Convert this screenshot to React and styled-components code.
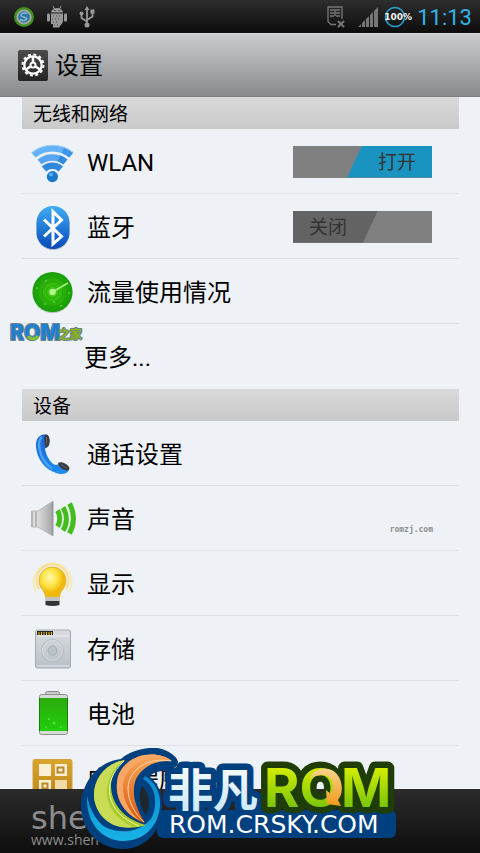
import React, { useState } from 'react'
import styled, { createGlobalStyle } from 'styled-components'

const GlobalStyle = createGlobalStyle`
  * {
    box-sizing: border-box;
  }
  body {
    margin: 0;
    background: #eef2f6;
    font-family: Roboto, 'Noto Sans CJK SC', sans-serif;
    color: #000000;
  }
`

const Screen = styled.div`
  position: relative;
  display: flex;
  flex-direction: column;
  height: 100vh;
  overflow: hidden;
`

const StatusBar = styled.div`
  flex: none;
  display: flex;
  align-items: center;
  justify-content: space-between;
  height: 33px;
  padding: 0 8px 0 13px;
  background: linear-gradient(#2e2e2e, #0c0c0c);
`

const StatusGroup = styled.div`
  display: flex;
  align-items: center;
  gap: ${props => props.$gap}px;
`

const BatteryLevel = styled.div`
  position: relative;
  display: flex;
  width: 27px;
  span {
    position: absolute;
    top: 5px;
    left: 0;
    color: #f4f4f4;
    font-family: 'DejaVu Sans', sans-serif;
    font-size: 9px;
    font-weight: bold;
    line-height: 12px;
  }
`

const Clock = styled.time`
  padding-top: 2px;
  color: #33b5e5;
  font-size: 22px;
  line-height: 30px;
`

const TitleBar = styled.header`
  flex: none;
  display: flex;
  align-items: center;
  gap: 7px;
  height: 64px;
  padding: 0 18px;
  border-top: 1px solid #d9dadc;
  border-bottom: 1px solid #7c7d81;
  background: linear-gradient(#cbccce, #88898d);
`

const Title = styled.h1`
  margin: 0;
  padding-top: 2px;
  font-size: 24px;
  font-weight: normal;
  line-height: 32px;
`

const Content = styled.main`
  position: relative;
  flex: 1;
  min-height: 0;
  overflow: hidden;
  padding: 0 21px 0 22px;
`

const SectionTitle = styled.h2`
  margin: 0;
  padding: 3px 11px 0;
  background: linear-gradient(#d9d9d9, #c9c9c9);
  font-size: 19px;
  font-weight: normal;
  line-height: 29px;
`

const List = styled.ul`
  margin: 0;
  padding: 0;
  list-style: none;
`

const Item = styled.li`
  height: 65px;
  border-bottom: 1px solid #dde1e4;
  &:last-child {
    border-bottom-color: transparent;
  }
`

const Row = styled.a`
  display: flex;
  align-items: center;
  gap: 12px;
  height: 100%;
  padding: 1px 27px 0 ${props => (props.$plain ? 62 : 9)}px;
  color: inherit;
  font-size: 24px;
  line-height: 32px;
  text-decoration: none;
`

const RowLabel = styled.span`
  flex: 1;
  padding-top: 3px;
`

const HiddenCheckbox = styled.input`
  position: absolute;
  opacity: 0;
`

const Track = styled.span`
  display: flex;
  justify-content: ${props => (props.$on ? 'flex-end' : 'flex-start')};
  width: 139px;
  height: 32px;
  background: #808080;
`

const Thumb = styled.span`
  width: 85px;
  padding: ${props => (props.$on ? '2px 0 0 15px' : '2px 15px 0 0')};
  background: ${props => (props.$on ? '#1a93c0' : '#636363')};
  clip-path: ${props =>
    props.$on
      ? 'polygon(15px 0, 100% 0, 100% 100%, 0 100%)'
      : 'polygon(0 0, 100% 0, 70px 100%, 0 100%)'};
  color: #333333;
  font-size: 19px;
  line-height: 30px;
  text-align: center;
`

const Footer = styled.footer`
  flex: none;
  height: 64px;
  padding: 14px 31px 0;
  background: linear-gradient(#2b2b2b, #0e0e0e);
  color: #8c8c8c;
`

const Brand = styled.div`
  font-family: 'DejaVu Sans', sans-serif;
  font-size: 32px;
  line-height: 30px;
`

const BrandSite = styled.div`
  font-family: 'Open Sans', sans-serif;
  font-size: 14px;
  line-height: 14px;
`

const HomeMark = styled.svg`
  position: absolute;
  top: 222px;
  left: 8px;
`

const SiteMark = styled.span`
  position: absolute;
  top: 428px;
  right: 47px;
  color: #8b8e90;
  font-family: 'DejaVu Sans Mono', monospace;
  font-size: 8px;
  font-weight: bold;
  line-height: 10px;
`

const Badge = styled.svg`
  position: absolute;
  bottom: 3px;
  left: 50%;
  transform: translateX(-50%);
`

const Icon = ({ children }) => (
  <svg width="44" height="48" viewBox="0 0 44 48" fill="none" overflow="visible" aria-hidden="true">
    {children}
  </svg>
)

const Gradient = ({ id, from, to, across }) => (
  <linearGradient id={id} x1="0" y1="0" x2={across ? 1 : 0} y2={across ? 0 : 1}>
    <stop offset="0" stopColor={from} />
    <stop offset="1" stopColor={to} />
  </linearGradient>
)

const WlanIcon = () => (
  <Icon>
    <g strokeWidth="6.500">
      <path d="M2.500 17A29.6 29.6 0 0 1 40.300 17" stroke="#66b2f8" />
      <path d="M32 12A29.6 29.6 0 0 1 40.300 17" stroke="#3c94ea" />
      <path d="M8.500 24A21 21 0 0 1 34.300 24" stroke="#58a6f2" />
      <path d="M28 20.200A21 21 0 0 1 34.300 24" stroke="#318ae0" />
      <path d="M13 31A12.5 12.5 0 0 1 29.800 31" stroke="#2f88dc" />
    </g>
    <path d="M1 14.500A33 33 0 0 1 42 14.500" stroke="#9bd0ff" />
    <circle cx="21.4" cy="38.6" r="5.6" fill="#1879cd" />
    <circle cx="20" cy="36.5" r="2" fill="#5bb0f0" />
  </Icon>
)

const BluetoothIcon = () => (
  <Icon>
    <Gradient id="bt" from="#41adf5" to="#0549b8" />
    <rect x="5.5" y="3.5" width="33" height="43.5" rx="16.5" fill="#aeb9c6" />
    <rect x="5.5" y="3" width="33" height="43" rx="16.5" fill="url(#bt)" />
    <path d="M13 16.5 30.5 33.5 22 41V8.500L30.5 17 13 33.500" stroke="#ffffff" strokeWidth="3" />
  </Icon>
)

const DataIcon = () => (
  <Icon>
    <radialGradient id="radar">
      <stop offset="0" stopColor="#48d013" />
      <stop offset="1" stopColor="#169c05" />
    </radialGradient>
    <circle cx="21.5" cy="25" r="20" fill="#b4c3b4" />
    <circle cx="21.5" cy="24" r="20" fill="url(#radar)" />
    <g stroke="#158f08" strokeOpacity="0.4">
      <circle cx="21.5" cy="24" r="6" />
      <circle cx="21.5" cy="24" r="10.500" />
      <circle cx="21.5" cy="24" r="15" />
    </g>
    <path d="M21.5 24 37 15" stroke="#a8f07e" strokeWidth="1.6" />
    <circle cx="21.500" cy="24" r="3.2" fill="#b6f58d" />
    <g fill="#8be95c">
      <circle cx="15" cy="13" r="0.8" />
      <circle cx="6" cy="20" r="0.8" />
      <circle cx="14" cy="36" r="0.8" />
      <circle cx="23" cy="34" r="0.8" />
      <circle cx="30" cy="38" r="0.8" />
      <circle cx="38" cy="25" r="0.8" />
    </g>
  </Icon>
)

const CallIcon = () => (
  <Icon>
    <Gradient id="call" from="#1c63d0" to="#1e8cf2" />
    <path
      d="M12.500 4.500C7 5.500 4.500 10 5 17C6 29 14 39.500 25 43C31 45 36.500 44 38 39.500C37.500 36 33 33 28.500 33C27 33.500 26.500 36 23 34.500C18.500 31.500 15 25 14 18.500C16 18 17 17 18 15C19 11 18 6 16 4.500Z"
      fill="url(#call)"
    />
    <path d="M11 7C7.500 10 7.500 14 8.500 19C10 27 14 34 21 38.500" stroke="#4aa2f5" strokeWidth="2.500" />
    <path d="M14 5C17 4 18 6 18.500 9C19 13 18 17 14.500 17.500C13 13 13 8 14 5Z" fill="#3b3b3f" />
    <path d="M27 33C30 31 37 34 38.500 38C38 41 36 41 34 40C31 39 28 37 27 33Z" fill="#3b3b3f" />
    <path d="M15.500 7V14M30 34.500 36 38.500" stroke="#66666a" />
  </Icon>
)

const SoundIcon = () => (
  <Icon>
    <Gradient id="cone" from="#f1f1f1" to="#a5a5a7" across />
    <path d="M0.500 16H7L22 6V41L7 32H0.500Z" fill="url(#cone)" stroke="#b7b7b9" />
    <path d="M1 16.500H6V31.500H1Z" fill="#b6b6b8" />
    <path d="M3 17V31" stroke="#dcdcde" strokeWidth="2" />
    <path d="M21.500 7V40.500" stroke="#98989a" strokeWidth="1.500" />
    <g stroke="#42bd1d" strokeWidth="5">
      <path d="M26.500 15.500C29.500 20 29.500 27 26.500 31.500" />
      <path d="M32 12.500C36.500 19 36.500 29 32 35.500" />
      <path d="M38.500 8.500C43.500 18 43.500 29 38.500 38.500" />
    </g>
  </Icon>
)

const DisplayIcon = () => (
  <Icon>
    <radialGradient id="bulb" cx="0.400" cy="0.350">
      <stop offset="0" stopColor="#fff8ad" />
      <stop offset="0.600" stopColor="#fde23f" />
      <stop offset="1" stopColor="#f2b90d" />
    </radialGradient>
    <path d="M5 32A19 19 0 1 1 38 32" stroke="#f7e9bd" strokeWidth="2" />
    <path d="M8 29A16 16 0 1 1 35 29" stroke="#f9df8f" strokeWidth="2" />
    <path
      d="M14.500 37C14.500 31 8 28 8 20.500A13.500 13.500 0 0 1 35 20.500C35 28 28.500 31 28.500 37Z"
      fill="url(#bulb)"
      stroke="#e1b62c"
    />
    <path d="M14 37H29V41H14Z" fill="#c3c3c3" />
    <path d="M14.500 41H28.500V45Q21.500 47 14.500 45Z" fill="#333333" />
  </Icon>
)

const StorageIcon = () => (
  <Icon>
    <Gradient id="disk" from="#d8dce0" to="#b9c0c7" />
    <rect x="4.500" y="5" width="35" height="38" rx="2" fill="url(#disk)" stroke="#a5abb1" />
    <path d="M6 11H38M6 41H38" stroke="#e8ecef" />
    <path d="M6 6H22V10H6Z" fill="#2c2614" />
    <path d="M8 7V10M10.500 7V10M13 7V10M15.500 7V10M18 7V10M20.500 7V10" stroke="#e9c83a" />
    <circle cx="21.500" cy="25.500" r="11" stroke="#b3bac1" />
    <circle cx="21.500" cy="25.500" r="10" stroke="#d6dbe0" />
    <circle cx="21.500" cy="25.500" r="4.500" fill="#bcc4cb" stroke="#a4acb4" />
  </Icon>
)

const BatteryIcon = () => (
  <Icon>
    <Gradient id="cell" from="#2cab0d" to="#20cf0b" />
    <rect x="14.500" y="1.500" width="14" height="5" rx="2" fill="#cccccc" stroke="#858585" />
    <rect x="8.500" y="4.500" width="28" height="40" rx="2" fill="#d7dad7" stroke="#8a908a" />
    <path d="M8 8H37V41H8Z" fill="url(#cell)" />
    <path d="M8.500 8V41M36.500 8V41" stroke="#197d0b" />
    <g fill="#4ddc3a">
      <circle cx="18" cy="29" r="1.200" />
      <circle cx="23" cy="33" r="1.500" />
      <circle cx="30" cy="37" r="1.200" />
      <circle cx="15" cy="37" r="1" />
    </g>
  </Icon>
)

const AppsIcon = () => (
  <Icon>
    <Gradient id="apps" from="#d9a62d" to="#bb8315" />
    <rect x="2" y="4.500" width="39" height="40" rx="2" fill="url(#apps)" stroke="#d0a03c" />
    <g fill="#f8efd5">
      <path d="M8 9H20V21H8ZM24 9H36V21H24ZM8 25H20V37H8Z" />
      <path d="M24 25H36V37H24Z" fill="#f1d9a8" />
    </g>
    <path d="M26.500 12.500H32.500V17.500H26.500ZM11.500 28.500H16.500V33.500H11.500Z" stroke="#b98a26" strokeWidth="2" />
  </Icon>
)

const SettingsIcon = () => (
  <svg width="30" height="31" viewBox="0 0 30 31" fill="none" aria-hidden="true">
    <Gradient id="tile" from="#4b4b4b" to="#242424" />
    <rect width="30" height="31" rx="2" fill="url(#tile)" />
    <circle cx="15" cy="15" r="10.500" stroke="#ffffff" strokeWidth="2" strokeDasharray="3 2.500" />
    <circle cx="15" cy="15" r="8.700" stroke="#ffffff" strokeWidth="2.200" />
    <path d="M15 7V12M12.500 16.500 8 19.500M17.500 16.500 22 19.500" stroke="#ffffff" strokeWidth="2.500" />
    <circle cx="15" cy="15" r="2.500" stroke="#ffffff" strokeWidth="2" />
  </svg>
)

const SyncIcon = () => (
  <svg width="22" height="22" viewBox="0 0 22 22" fill="none" aria-hidden="true">
    <circle cx="11" cy="11" r="8.800" fill="#a2a8a8" stroke="#43911a" strokeWidth="2.400" />
    <circle cx="11" cy="11" r="5.800" fill="#2878a8" />
    <path d="M14.500 7.500C10 6 7 8 8.500 10C10 11.500 14 11 13.500 13C13 15 9.500 15 7 13.500" stroke="#8fb4c4" strokeWidth="1.500" />
  </svg>
)

const AndroidIcon = () => (
  <svg width="20" height="24" viewBox="0 0 20 24" fill="#999999" aria-hidden="true">
    <path d="M4 7.500C4.500 4.500 7 3 10 3S15.500 4.500 16 7.500Z" />
    <path d="M6 1 7.500 4M14 1 12.500 4" stroke="#999999" />
    <rect y="8.500" width="3" height="8" rx="1" />
    <rect x="17" y="8.500" width="3" height="8" rx="1" />
    <path d="M4 8.500H16V17L12 22.500H6V19H4Z" />
    <path d="M6 11H14M5 14H13M6 17H12M7 20H11" stroke="#444444" strokeDasharray="1 2" />
    <path d="M8 6V5M12 6V5" stroke="#222222" />
  </svg>
)

const UsbIcon = () => (
  <svg width="16" height="22" viewBox="-1 0 16 22" fill="none" stroke="#999999" strokeWidth="1.800" aria-hidden="true">
    <path d="M7 2V19M7 15.500 1.500 12V8M7 14 12.500 10.500V6" />
    <path d="M7 0 9.500 4H4.500ZM10.500 3.500H14.500V7.500H10.500Z" fill="#999999" stroke="none" />
    <circle cx="1.500" cy="7.500" r="2" fill="#999999" stroke="none" />
    <circle cx="7" cy="19" r="2.500" fill="#999999" stroke="none" />
  </svg>
)

const SimIcon = () => (
  <svg width="18" height="22" viewBox="0 0 18 22" fill="none" stroke="#777777" aria-hidden="true">
    <path d="M9 18.500H4L1 15.500V1H15V13" strokeWidth="1.300" />
    <path d="M3 4H7M3 7H7M3 10H7M9 4H13M9 7H13M9 10H13M8 3V10" strokeWidth="1.500" />
    <path d="M11 15 17 21M17 15 11 21" strokeWidth="2" />
  </svg>
)

const SignalIcon = () => (
  <svg width="20" height="20" viewBox="0 0 20 20" fill="#777777" aria-hidden="true">
    <path d="M0 20 3 17V20ZM4 20V16L7 13V20ZM8 20V12L11 9V20ZM12 20V8L15 5V20ZM16 20V4L20 0V20Z" />
  </svg>
)

const Switch = ({ id, on, onChange }) => (
  <>
    <HiddenCheckbox id={id} type="checkbox" checked={on} onChange={onChange} />
    <Track $on={on}>
      <Thumb $on={on}>{on ? '打开' : '关闭'}</Thumb>
    </Track>
  </>
)

const SwitchRow = ({ id, icon, label, initial }) => {
  const [on, setOn] = useState(initial)
  return (
    <Item>
      <Row as="label" htmlFor={id}>
        {icon}
        <RowLabel>{label}</RowLabel>
        <Switch id={id} on={on} onChange={() => setOn(!on)} />
      </Row>
    </Item>
  )
}

const LinkRow = ({ id, icon, label }) => (
  <Item>
    <Row href={`#${id}`} $plain={!icon}>
      {icon}
      <RowLabel>{label}</RowLabel>
    </Row>
  </Item>
)

const deviceRows = [
  { id: 'call', icon: <CallIcon />, label: '通话设置' },
  { id: 'sound', icon: <SoundIcon />, label: '声音' },
  { id: 'display', icon: <DisplayIcon />, label: '显示' },
  { id: 'storage', icon: <StorageIcon />, label: '存储' },
  { id: 'battery', icon: <BatteryIcon />, label: '电池' },
  { id: 'apps', icon: <AppsIcon />, label: '应用程序' }
]

const RomHomeMark = () => (
  <HomeMark width="76" height="26" viewBox="8 319 76 26">
    <g stroke="#6f7f86" strokeWidth="2" paintOrder="stroke" strokeLinejoin="round">
      <text x="10" y="340" fill="#1f7fd2" fontFamily="Inter, sans-serif" fontSize="21" fontWeight="800">
        ROM
      </text>
      <text x="58" y="339" fill="#86b817" fontFamily="Noto Sans CJK SC, sans-serif" fontSize="12" fontWeight="700">
        之家
      </text>
    </g>
    <path d="M28 336A6 6 0 0 0 38 336" fill="none" stroke="#86c32a" strokeWidth="3" />
  </HomeMark>
)

const RomBadge = () => (
  <Badge width="318" height="102" viewBox="82 748 318 102" fill="none">
    <Gradient id="word" from="#ffffff" to="#c4e6fb" />
    <Gradient id="rom" from="#f0f900" to="#5db80c" />
    <Gradient id="orange" from="#f9a85a" to="#d9570f" />
    <Gradient id="ring" from="#0a86cc" to="#16b4e6" />
    <Gradient id="arrow" from="#fbd28a" to="#f29a1c" />
    <path
      d="M82 806C82 786 96 762 122 759C130 751 146 747 158 748C168 749 179 757 179 762C179 768 172 769 163 771C155 772 151 775 151 777C160 784 164 796 163 808C162 832 146 849 124 849C100 849 82 830 82 806Z"
      fill="#00407f"
    />
    <rect x="158" y="810" width="239" height="28" rx="6" fill="#00407f" />
    <path d="M143 786C151 793 152 806 147 815C140 806 139 795 143 786Z" fill="#20272c" />
    <path
      d="M146 776C156 782 162 793 161 805C160 826 145 841 124 841C103 840 87 824 88 796C92 815 104 832 122 835C140 836 155 823 156 805C157 794 153 784 144 779Z"
      fill="url(#ring)"
    />
    <path d="M94 816C104 834 139 838 152 818C143 842 104 844 94 816Z" fill="#18ade2" />
    <path d="M126 760C105 763 94 781 95 797C97 818 120 834 147 825C124 819 112 803 112 785C112 775 118 766 126 760Z" fill="#a9cc2b" />
    <path d="M126 760C100 778 101 812 134 827C110 831 95 812 95 795C95 779 106 763 126 760Z" fill="#c9dc55" />
    <path d="M125 761C101 783 107 813 140 826" stroke="#eef3b0" />
    <path d="M173 761C158 749 128 753 119 776C114 797 126 817 146 823C136 806 132 793 137 779C144 766 157 760 173 761Z" fill="url(#orange)" />
    <path d="M173 761C153 751 126 764 124 785C123 800 132 815 142 821C124 813 114 796 119 777C127 753 158 749 173 761Z" fill="#f9a765" />
    <path d="M172 761C149 757 130 769 129 788C129 803 137 815 145 822" stroke="#ffd8b0" />
    <text
      x="169"
      y="807"
      fill="url(#word)"
      stroke="#00407f"
      strokeWidth="13"
      strokeLinejoin="round"
      paintOrder="stroke"
      fontFamily="Noto Sans CJK SC, sans-serif"
      fontSize="45"
      fontWeight="700"
    >
      非凡
    </text>
    <text
      x="265"
      y="807"
      fill="url(#rom)"
      stroke="#1f3d06"
      strokeWidth="13"
      strokeLinejoin="round"
      paintOrder="stroke"
      fontFamily="Inter, sans-serif"
      fontSize="54"
      fontWeight="700"
    >
      ROM
    </text>
    <path d="M310 779C316 766 333 765 340 777C344 785 344 794 339 800L342 806L328 804L327 790L332 794C336 785 334 776 325 775C318 775 314 776 310 779Z" fill="url(#arrow)" />
    <text
      x="170"
      y="833"
      fill="#ffffff"
      stroke="#00407f"
      strokeWidth="5"
      strokeLinejoin="round"
      paintOrder="stroke"
      fontFamily="DejaVu Sans, sans-serif"
      fontSize="25"
    >
      ROM.CRSKY.COM
    </text>
  </Badge>
)

export default () => (
  <Screen>
    <GlobalStyle />
    <StatusBar>
      <StatusGroup $gap={12}>
        <SyncIcon />
        <AndroidIcon />
        <UsbIcon />
      </StatusGroup>
      <StatusGroup $gap={6}>
        <StatusGroup $gap={13}>
          <SimIcon />
          <SignalIcon />
        </StatusGroup>
        <BatteryLevel>
          <svg width="22" height="22" viewBox="0 0 22 22" fill="none" aria-hidden="true">
            <circle cx="11" cy="11" r="9.500" stroke="#2a9fd0" strokeWidth="1.600" />
          </svg>
          <span>100%</span>
        </BatteryLevel>
        <Clock>11:13</Clock>
      </StatusGroup>
    </StatusBar>
    <TitleBar>
      <SettingsIcon />
      <Title>设置</Title>
    </TitleBar>
    <Content>
      <SectionTitle>无线和网络</SectionTitle>
      <List>
        <SwitchRow id="wlan" icon={<WlanIcon />} label="WLAN" initial={true} />
        <SwitchRow id="bluetooth" icon={<BluetoothIcon />} label="蓝牙" initial={false} />
        <LinkRow id="data" icon={<DataIcon />} label="流量使用情况" />
        <LinkRow id="more" label="更多..." />
      </List>
      <SectionTitle>设备</SectionTitle>
      <List>
        {deviceRows.map(row => (
          <LinkRow key={row.id} {...row} />
        ))}
      </List>
      <RomHomeMark />
      <SiteMark>romzj.com</SiteMark>
    </Content>
    <Footer>
      <Brand>she</Brand>
      <BrandSite>www.shen</BrandSite>
    </Footer>
    <RomBadge />
  </Screen>
)
